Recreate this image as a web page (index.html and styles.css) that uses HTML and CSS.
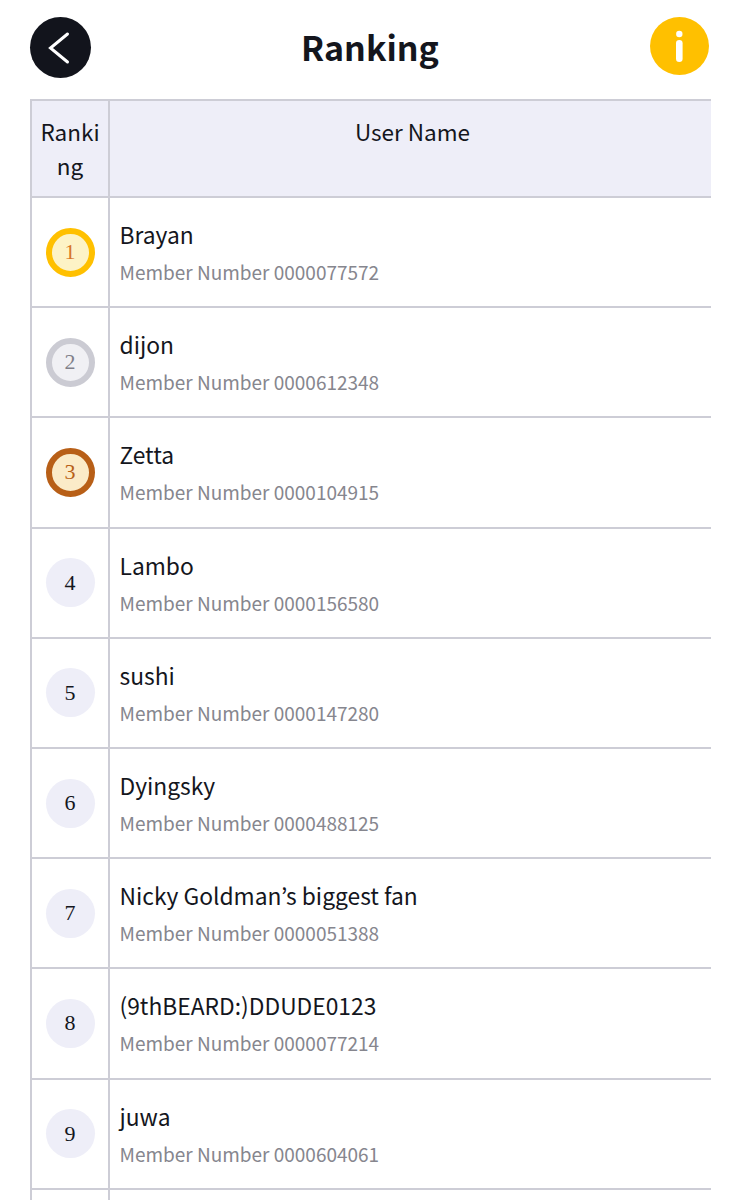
FILE: index.html
```html
<!DOCTYPE html>
<html lang="en">
<head>
<meta charset="utf-8">
<title>Ranking</title>
<link rel="stylesheet" href="styles.css">
</head>
<body>
<header class="topbar">
  <button class="round back" aria-label="Back">
    <svg width="61" height="61" viewBox="0 0 61 61"><path d="M37.500 17 L20.500 31 L37.500 45" fill="none" stroke="#fff" stroke-width="3" stroke-linecap="round" stroke-linejoin="miter"/></svg>
  </button>
  <h1 class="title">Ranking</h1>
  <button class="round info" aria-label="Info">
    <svg width="59" height="58" viewBox="0 0 59 58"><circle cx="29.300" cy="17" r="3.200" fill="#fff"/><rect x="26" y="23" width="6.600" height="22" rx="3.300" fill="#fff"/></svg>
  </button>
</header>
<main class="table">
  <div class="row head">
    <div class="rank-cell">Ranking</div>
    <div class="name-cell">User Name</div>
  </div>
  <div class="row">
    <div class="rank-cell"><span class="medal gold">1</span></div>
    <div class="name-cell"><div class="name">Brayan</div><div class="member">Member Number 0000077572</div></div>
  </div>
  <div class="row">
    <div class="rank-cell"><span class="medal silver">2</span></div>
    <div class="name-cell"><div class="name">dijon</div><div class="member">Member Number 0000612348</div></div>
  </div>
  <div class="row">
    <div class="rank-cell"><span class="medal bronze">3</span></div>
    <div class="name-cell"><div class="name">Zetta</div><div class="member">Member Number 0000104915</div></div>
  </div>
  <div class="row">
    <div class="rank-cell"><span class="medal">4</span></div>
    <div class="name-cell"><div class="name">Lambo</div><div class="member">Member Number 0000156580</div></div>
  </div>
  <div class="row">
    <div class="rank-cell"><span class="medal">5</span></div>
    <div class="name-cell"><div class="name">sushi</div><div class="member">Member Number 0000147280</div></div>
  </div>
  <div class="row">
    <div class="rank-cell"><span class="medal">6</span></div>
    <div class="name-cell"><div class="name">Dyingsky</div><div class="member">Member Number 0000488125</div></div>
  </div>
  <div class="row">
    <div class="rank-cell"><span class="medal">7</span></div>
    <div class="name-cell"><div class="name">Nicky Goldman’s biggest fan</div><div class="member">Member Number 0000051388</div></div>
  </div>
  <div class="row">
    <div class="rank-cell"><span class="medal">8</span></div>
    <div class="name-cell"><div class="name">(9thBEARD:)DDUDE0123</div><div class="member">Member Number 0000077214</div></div>
  </div>
  <div class="row">
    <div class="rank-cell"><span class="medal">9</span></div>
    <div class="name-cell"><div class="name">juwa</div><div class="member">Member Number 0000604061</div></div>
  </div>
  <div class="row">
    <div class="rank-cell"></div>
    <div class="name-cell"></div>
  </div>
</main>
</body>
</html>
```
FILE: styles.css
```css
* { box-sizing: border-box; }
html, body { height: 1200px; overflow: hidden; }
body {
  margin: 0;
  background: #fff;
  color: #14161d;
  font-family: "Noto Sans CJK JP", "Noto Sans", sans-serif;
}
.topbar {
  display: flex;
  align-items: flex-start;
  justify-content: space-between;
  height: 99px;
  padding: 17px 32px 0 30px;
}
.title {
  margin: 0 0 0 -1px;
  font-size: 34px;
  font-weight: 700;
  line-height: 60px;
}
.round {
  padding: 0;
  border: 0;
  border-radius: 50%;
  display: block;
}
.round svg { display: block; }
.back { background: #12141c; width: 61px; height: 61px; }
.info { background: #ffc000; width: 59px; height: 58px; }
.table {
  width: 681px;
  height: 1101px;
  overflow: hidden;
  margin-left: 30px;
  border-left: 2px solid #cdcdd6;
  border-top: 2px solid #cdcdd6;
}
.row {
  display: flex;
  height: 110.200px;
  border-bottom: 2px solid #cdcdd6;
}
.head {
  height: 97px;
  background: #eeeef8;
  font-size: 22.500px;
  line-height: 34px;
}
.rank-cell {
  width: 78px;
  flex: none;
  border-right: 2px solid #cdcdd6;
  display: flex;
  align-items: center;
  justify-content: center;
  word-break: break-all;
  text-align: center;
  padding: 0 6px;
}
.head .rank-cell { align-items: flex-start; padding: 13px 4px 0; }
.name-cell {
  flex: 1;
  padding: 20px 10px 0 9.500px;
}
.head .name-cell { padding: 13px 8px 0 12px; text-align: center; }
.name {
  font-size: 22.800px;
  line-height: 34px;
  white-space: nowrap;
}
.member {
  margin-top: 5px;
  font-size: 19px;
  line-height: 30px;
  color: #86868e;
  white-space: nowrap;
}
.medal {
  width: 49px;
  height: 49px;
  border-radius: 50%;
  display: flex;
  align-items: center;
  justify-content: center;
  background: #eeeef8;
  font-family: "Liberation Serif", serif;
  font-size: 22px;
  color: #14161d;
}
.gold { background: #fdf3c6; border: 6px solid #ffc000; color: #d8762a; }
.silver { background: #f0f0f4; border: 6px solid #cbcbd3; color: #80808a; }
.bronze { background: #fbebc8; border: 6px solid #b85f17; color: #b85f17; }
```
